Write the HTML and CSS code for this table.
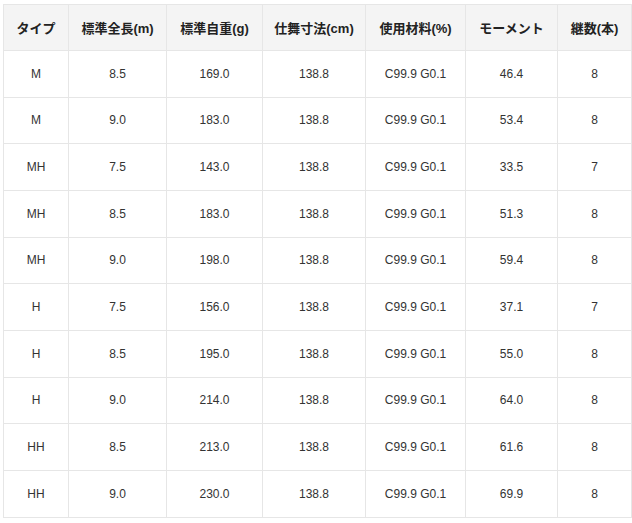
FILE: index.html
```html
<!DOCTYPE html>
<html lang="ja">
<head>
<meta charset="utf-8">
<link rel="stylesheet" href="styles.css">
</head>
<body>
<div class="wrap">
<table class="spec">
<colgroup>
<col class="c1"><col class="c2"><col class="c3"><col class="c4"><col class="c5"><col class="c6"><col class="c7">
</colgroup>
<thead>
<tr><th>タイプ</th><th>標準全長(m)</th><th>標準自重(g)</th><th>仕舞寸法(cm)</th><th>使用材料(%)</th><th>モーメント</th><th>継数(本)</th></tr>
</thead>
<tbody>
<tr><td>M</td><td>8.5</td><td>169.0</td><td>138.8</td><td>C99.9 G0.1</td><td>46.4</td><td>8</td></tr>
<tr><td>M</td><td>9.0</td><td>183.0</td><td>138.8</td><td>C99.9 G0.1</td><td>53.4</td><td>8</td></tr>
<tr><td>MH</td><td>7.5</td><td>143.0</td><td>138.8</td><td>C99.9 G0.1</td><td>33.5</td><td>7</td></tr>
<tr><td>MH</td><td>8.5</td><td>183.0</td><td>138.8</td><td>C99.9 G0.1</td><td>51.3</td><td>8</td></tr>
<tr><td>MH</td><td>9.0</td><td>198.0</td><td>138.8</td><td>C99.9 G0.1</td><td>59.4</td><td>8</td></tr>
<tr><td>H</td><td>7.5</td><td>156.0</td><td>138.8</td><td>C99.9 G0.1</td><td>37.1</td><td>7</td></tr>
<tr><td>H</td><td>8.5</td><td>195.0</td><td>138.8</td><td>C99.9 G0.1</td><td>55.0</td><td>8</td></tr>
<tr><td>H</td><td>9.0</td><td>214.0</td><td>138.8</td><td>C99.9 G0.1</td><td>64.0</td><td>8</td></tr>
<tr><td>HH</td><td>8.5</td><td>213.0</td><td>138.8</td><td>C99.9 G0.1</td><td>61.6</td><td>8</td></tr>
<tr><td>HH</td><td>9.0</td><td>230.0</td><td>138.8</td><td>C99.9 G0.1</td><td>69.9</td><td>8</td></tr>
</tbody>
</table>
</div>
</body>
</html>
```

FILE: styles.css
```css
html, body {
  margin: 0;
  padding: 0;
  background: #ffffff;
}
.wrap {
  padding: 4px 0 0 3px;
}
.spec {
  border-collapse: collapse;
  table-layout: fixed;
  width: 628px;
  font-family: "Liberation Sans", "Noto Sans CJK JP", sans-serif;
  color: #333333;
}
.c1 { width: 65px; }
.c2 { width: 98px; }
.c3 { width: 96px; }
.c4 { width: 103px; }
.c5 { width: 100px; }
.c6 { width: 92px; }
.c7 { width: 74px; }
.spec th,
.spec td {
  border: 1px solid #e6e6e6;
  text-align: center;
  vertical-align: middle;
  padding: 0;
  white-space: nowrap;
}
.spec th {
  height: 45px;
  background: #f4f4f4;
  font-size: 13px;
  font-weight: bold;
  color: #222222;
}
.spec td {
  height: 45.67px;
  font-size: 12px;
  color: #333333;
}
```
